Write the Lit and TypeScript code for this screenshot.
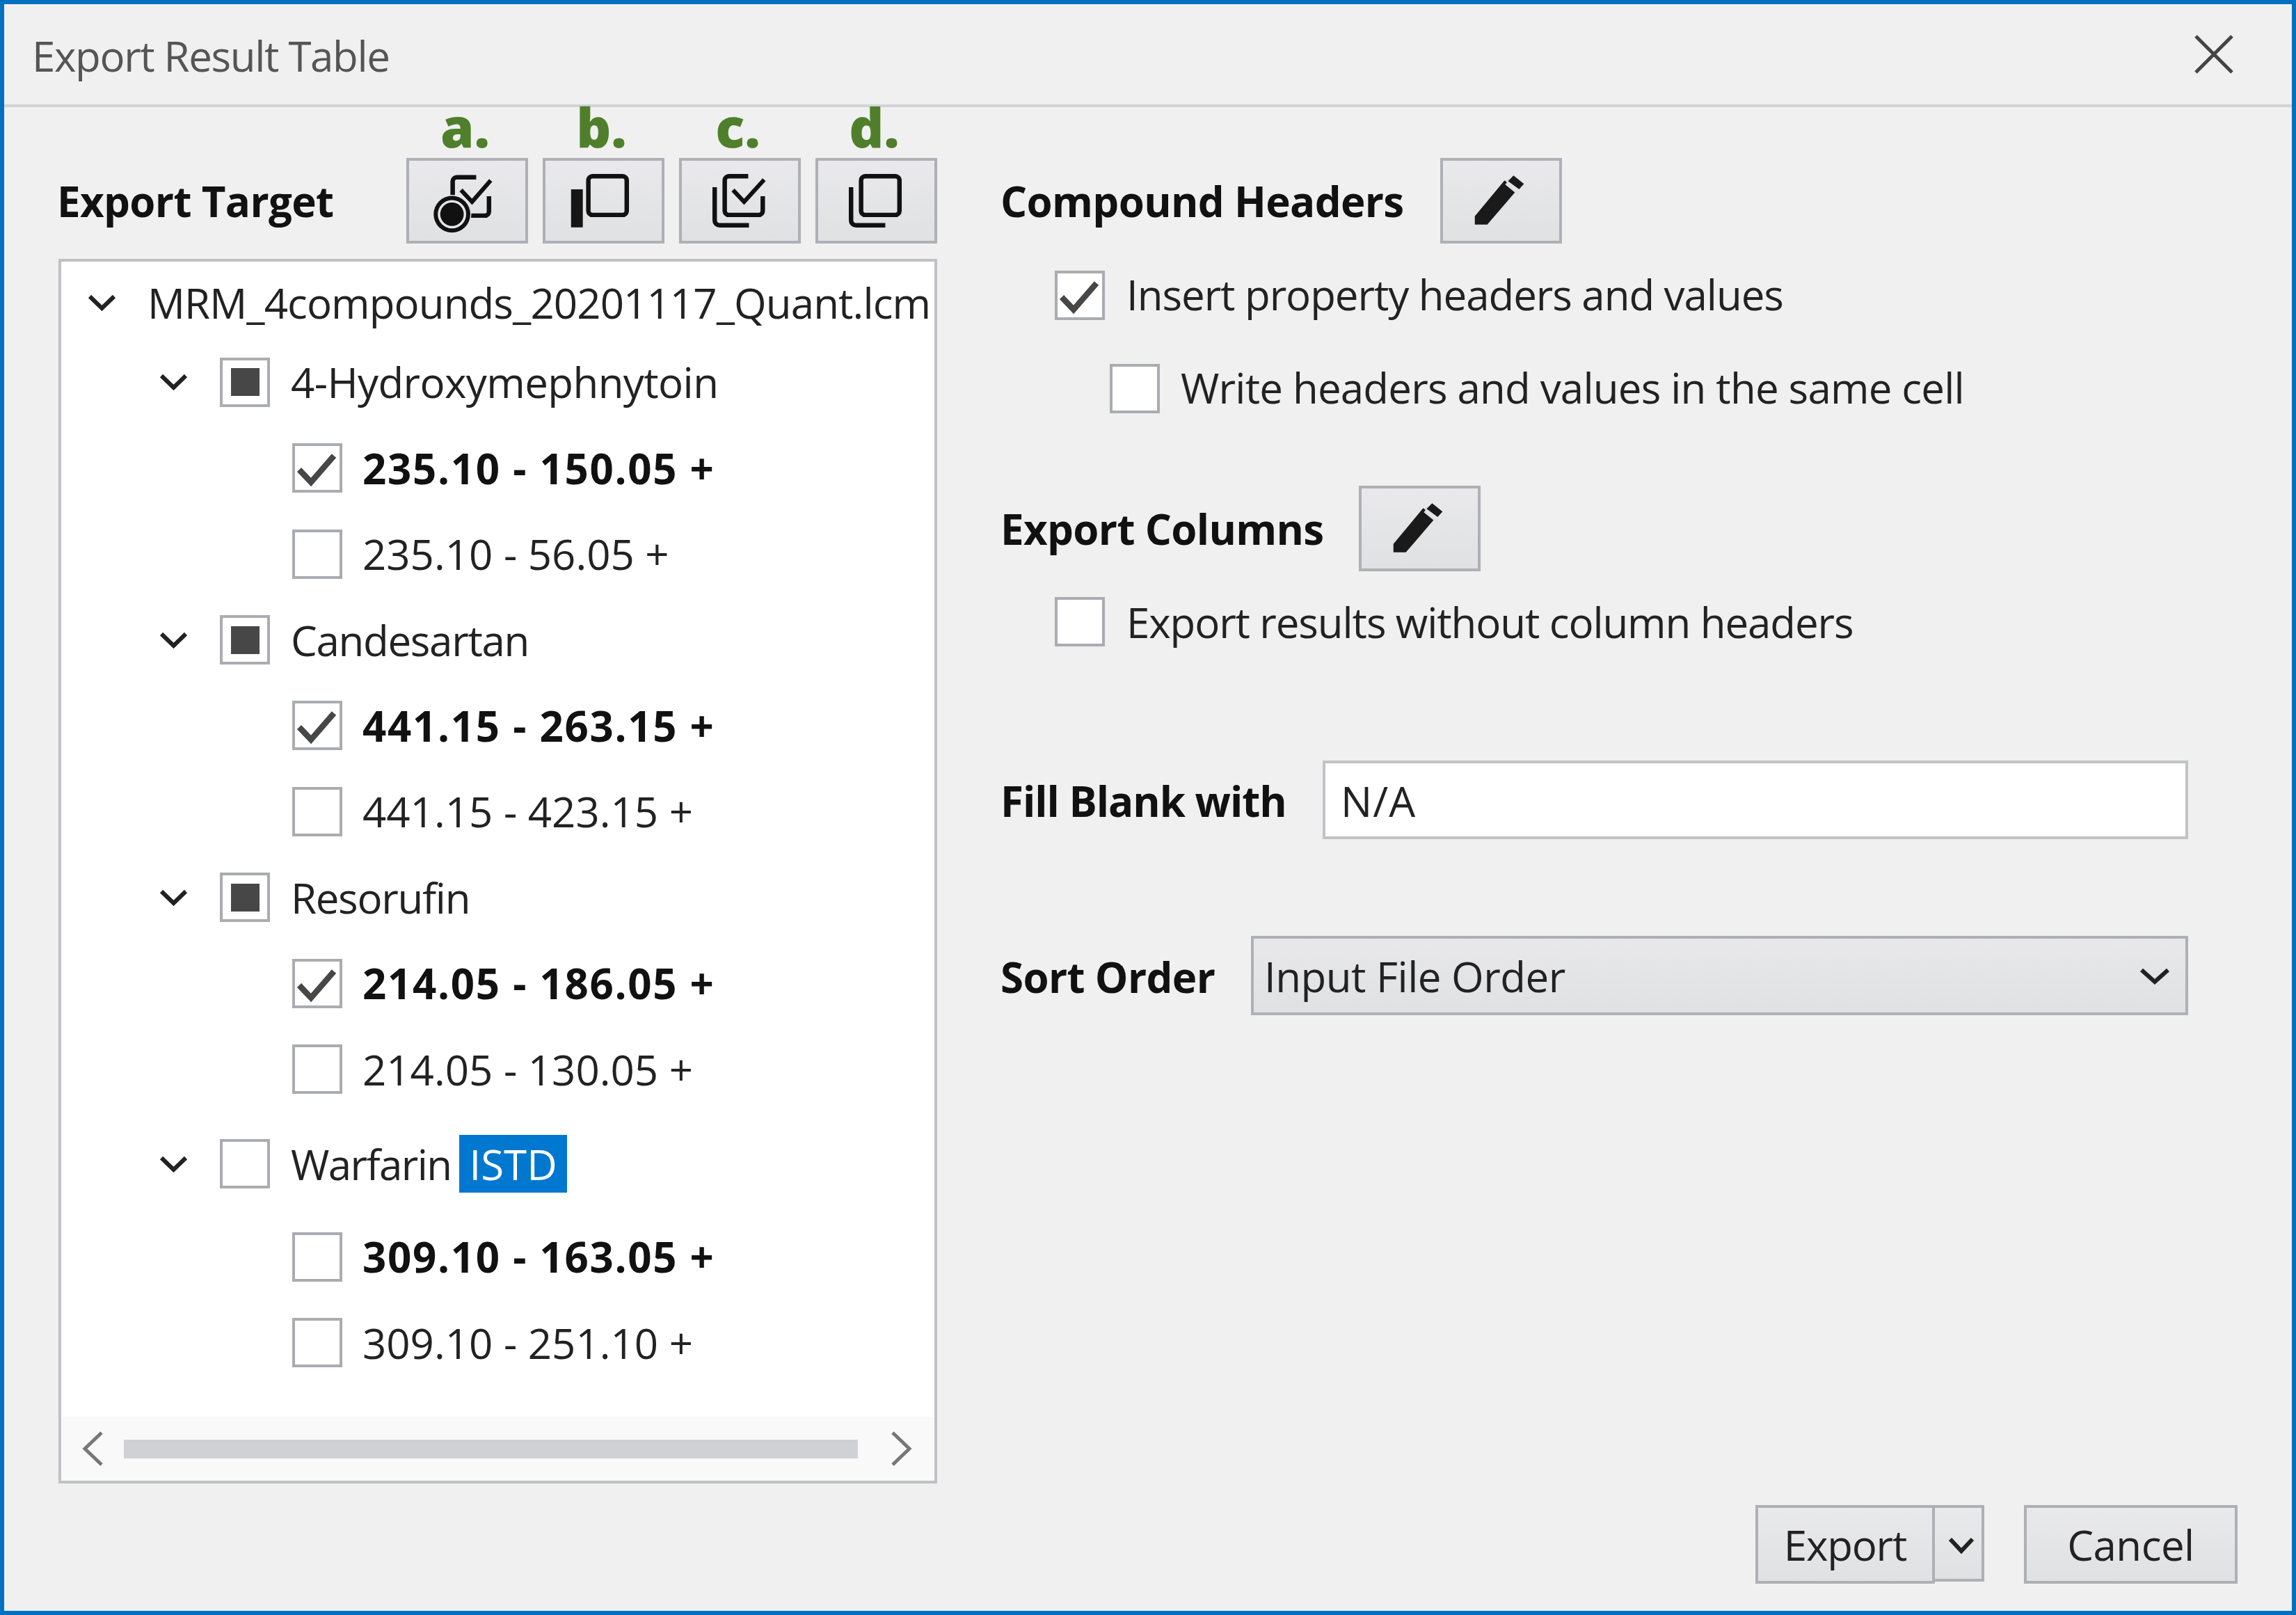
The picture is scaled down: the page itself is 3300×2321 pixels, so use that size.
import { LitElement, html, css } from "lit";
import { customElement } from "lit/decorators.js";

type Row = { kind: "root" | "comp" | "leaf"; text: string; state?: "on" | "mixed" | "off"; bold?: boolean; badge?: string; cls?: string };

const ROWS: Row[] = [
  { kind: "root", text: "MRM_4compounds_20201117_Quant.lcm" },
  { kind: "comp", text: "4-Hydroxymephnytoin", state: "mixed", cls: "first" },
  { kind: "leaf", text: "235.10 - 150.05 +", state: "on", bold: true },
  { kind: "leaf", text: "235.10 - 56.05 +", state: "off" },
  { kind: "comp", text: "Candesartan", state: "mixed" },
  { kind: "leaf", text: "441.15 - 263.15 +", state: "on", bold: true },
  { kind: "leaf", text: "441.15 - 423.15 +", state: "off" },
  { kind: "comp", text: "Resorufin", state: "mixed" },
  { kind: "leaf", text: "214.05 - 186.05 +", state: "on", bold: true },
  { kind: "leaf", text: "214.05 - 130.05 +", state: "off" },
  { kind: "comp", text: "Warfarin", state: "off", badge: "ISTD", cls: "warf" },
  { kind: "leaf", text: "309.10 - 163.05 +", state: "off", bold: true, cls: "warf-leaf" },
  { kind: "leaf", text: "309.10 - 251.10 +", state: "off" },
];

const chevron = html`<svg class="chev" viewBox="0 0 41 24"><path d="M3 3 L20.5 20 L38 3" fill="none" stroke="#222" stroke-width="6"/></svg>`;

const pencilSvg = html`<svg class="fill" viewBox="0 0 168 115"><polygon points="46,92 46,80 89,28 107,42 64,92" fill="#1a1a1a"/><polygon points="91,27 102,23 117,34 108,40" fill="#e2e2e4"/><polygon points="94,29 102,21 117,33 110,41" fill="#1a1a1a"/><polygon points="90,34 93,30 111,44 107,48" fill="#e2e2e4"/></svg>`;

const icons = [
  html`<svg class="fill" viewBox="0 0 168 115"><path d="M97 23.5 H69 a6 6 0 0 0 -6 6 V52 M115.5 51 V73 a6 6 0 0 1 -6 6 H89" fill="none" stroke="#111" stroke-width="6.5"/><path d="M75 42 L91 59 L118 28" fill="none" stroke="#111" stroke-width="6"/><circle cx="62" cy="77" r="28" fill="#e4e4e6"/><circle cx="62" cy="77" r="26.5" fill="#111"/><circle cx="62" cy="77" r="20.5" fill="#e6e6e8"/><circle cx="62" cy="77" r="17" fill="#111"/></svg>`,
  html`<svg class="fill" viewBox="0 0 168 115"><rect x="37" y="41" width="17" height="55" fill="#161616"/><rect x="62" y="22" width="55.5" height="56" rx="6" fill="none" stroke="#111" stroke-width="6.5"/></svg>`,
  html`<svg class="fill" viewBox="0 0 168 115"><path d="M96 22 H68 a6 6 0 0 0 -6 6 V72 a6 6 0 0 0 6 6 H111 a6 6 0 0 0 6 -6 V51" fill="none" stroke="#111" stroke-width="6.5"/><path d="M74 42 L90 59 L119 27" fill="none" stroke="#111" stroke-width="6"/><path d="M47.5 38 V86 a7 7 0 0 0 7 7 H97" fill="none" stroke="#111" stroke-width="6.5"/></svg>`,
  html`<svg class="fill" viewBox="0 0 168 115"><rect x="62" y="22" width="55.5" height="56" rx="6" fill="none" stroke="#111" stroke-width="6.5"/><path d="M47.5 38 V86 a7 7 0 0 0 7 7 H97" fill="none" stroke="#111" stroke-width="6.5"/></svg>`,
];

@customElement("app-root")
export class AppRoot extends LitElement {
  static styles = css`
    :host {
      display: block;
      width: 3300px;
      height: 2321px;
      font-family: "Open Sans", "Noto Sans", sans-serif;
      font-size: 60px;
      color: #222;
    }
    * { box-sizing: border-box; }
    .window {
      width: 100%;
      height: 100%;
      border: 6px solid #0070c0;
      background: #f0f0f0;
      display: flex;
      flex-direction: column;
      filter: blur(0.6px);
    }
    .titlebar {
      height: 148px;
      flex: none;
      border-bottom: 4px solid #d2d3d6;
      display: flex;
      align-items: center;
      justify-content: space-between;
      padding: 0 82px 0 40px;
      color: #555;
    }
    .title { letter-spacing: -1.35px; padding-top: 4px; }
    .close { width: 60px; height: 60px; display: block; }
    .body {
      flex: 1;
      min-height: 0;
      display: flex;
      gap: 93px;
      padding: 73px 0 0 78px;
    }
    .left { width: 1263px; flex: none; display: flex; flex-direction: column; gap: 22px; }
    .head { display: flex; align-items: center; height: 123px; }
    .label { font-weight: 700; color: #111; white-space: nowrap; letter-spacing: -0.65px; margin-left: -2px; }
    .tools { margin-left: auto; display: flex; gap: 21px; }
    .btn {
      position: relative;
      width: 175px;
      height: 123px;
      border: 4px solid #aeb0b5;
      background: linear-gradient(#e9e9eb, #e0e1e3);
      display: block;
      flex: none;
      padding: 0;
    }
    .fill { width: 100%; height: 100%; display: block; }
    .tag {
      position: absolute;
      left: -6px;
      right: 0;
      bottom: calc(100% + 10px);
      text-align: center;
      font-weight: 800;
      font-size: 78px;
      line-height: 1;
      color: #4f7f2b;
    }
    .tree {
      height: 1760px;
      border: 4px solid #c0c1c5;
      background: #fff;
      display: flex;
      flex-direction: column;
      overflow: hidden;
    }
    .rows {
      flex: 1;
      min-height: 0;
      overflow: hidden;
      padding-top: 20px;
      display: flex;
      flex-direction: column;
      gap: 45.4px;
    }
    .row { height: 78px; flex: none; display: flex; align-items: center; white-space: nowrap; letter-spacing: 0; }
    .row.root { padding-left: 38px; letter-spacing: -0.9px; }
    .row.root .chev { margin-right: 45px; }
    .row.comp { padding-left: 141px; letter-spacing: -1.3px; }
    .row.first { letter-spacing: -0.6px; }
    .row.leaf { padding-left: 332px; }
    .row.first { margin-top: -9px; }
    .row.warf { margin-top: 13px; letter-spacing: -1.6px; }
    .row.warf-leaf { margin-top: 10px; }
    .chev { width: 41px; height: 24px; flex: none; margin-right: 46px; }
    .comp .cb { margin-right: 30px; }
    .leaf .cb { margin-right: 29px; }
    .cb {
      width: 72px;
      height: 71px;
      flex: none;
      border: 4px solid #aaacb2;
      background: #fff;
      display: flex;
      align-items: center;
      justify-content: center;
    }
    .cb svg { width: 100%; height: 100%; display: block; }
    .mixed-mark { width: 41px; height: 40px; background: #474747; }
    .strong { font-weight: 700; color: #111; letter-spacing: 1.7px; }
    .badge { background: #0078d0; color: #fff; padding: 0 14px; margin-left: 12px; height: 83px; display: flex; align-items: center; letter-spacing: 0; }
    .hbar {
      height: 92px;
      flex: none;
      background: #f9f9f9;
      display: flex;
      align-items: center;
      padding-left: 30px;
    }
    .arrow { width: 31px; height: 50px; flex: none; display: block; }
    .thumb { width: 1055px; height: 27px; background: #d0d1d5; margin: 0 47px 0 29px; flex: none; }
    .right { width: 1705px; flex: none; display: flex; flex-direction: column; }
    .ch-label { flex: 0 0 632px; }
    .ec-label { flex: 0 0 515px; }
    .check { display: flex; align-items: center; height: 71px; gap: 31px; white-space: nowrap; }
    .c1 { margin: 39px 0 0 76px; letter-spacing: -1.05px; padding-bottom: 0; }
    .c2 { margin: 63px 0 0 155px; gap: 30px; letter-spacing: -0.8px; }
    .c1 span:last-child, .c2 span:last-child { padding-bottom: 3px; }
    .h2 { margin-top: 104px; }
    .c3 { margin: 37px 0 0 76px; letter-spacing: -1.1px; }
    .field { display: flex; align-items: center; }
    .f1 { margin-top: 164px; }
    .f2 { margin-top: 139px; }
    .fb-label { flex: 0 0 463px; letter-spacing: -1px; padding-top: 3px; }
    .so-label { flex: 0 0 360px; padding-top: 3px; }
    .input {
      flex: 1;
      height: 113px;
      background: #fff;
      border: 4px solid #c2c3c7;
      display: flex;
      align-items: center;
      padding: 3px 0 0 22px;
      letter-spacing: 1px;
    }
    .select {
      flex: 1;
      height: 114px;
      border: 4px solid #aeb0b5;
      background: linear-gradient(#e8e8ea, #e0e1e3);
      display: flex;
      align-items: center;
      justify-content: space-between;
      padding: 2px 22px 0 15px;
      letter-spacing: -0.5px;
    }
    .select svg { width: 44px; height: 24px; display: block; }
    .footer {
      flex: none;
      display: flex;
      justify-content: flex-end;
      align-items: flex-start;
      padding: 31px 78px 39px 0;
    }
    .fbtn {
      height: 113px;
      border: 4px solid #aeb0b5;
      background: linear-gradient(#e9e9eb, #e0e1e3);
      display: flex;
      align-items: center;
      justify-content: center;
    }
    .export { width: 258px; letter-spacing: -1.2px; }
    .split { width: 71px; height: 110px; border-left: none; padding: 6px 0 0 8px; }
    .split svg { width: 38px; height: 24px; display: block; }
    .cancel { width: 307px; margin-left: 57px; letter-spacing: -0.5px; }
  `;

  private box(state: Row["state"]) {
    return html`<span class="cb">
      ${state === "on"
        ? html`<svg viewBox="0 0 64 63"><path d="M6 34 L23 52 L56 14" fill="none" stroke="#474747" stroke-width="8.5"/></svg>`
        : state === "mixed"
          ? html`<span class="mixed-mark"></span>`
          : ""}
    </span>`;
  }

  private row(r: Row) {
    return html`<div class="row ${r.kind} ${r.cls ?? ""}">
      ${r.kind !== "leaf" ? chevron : ""}
      ${r.state ? this.box(r.state) : ""}
      <span class=${r.bold ? "strong" : ""}>${r.text}</span>
      ${r.badge ? html`<span class="badge">${r.badge}</span>` : ""}
    </div>`;
  }

  render() {
    return html`<div class="window">
      <div class="titlebar">
        <span class="title">Export Result Table</span>
        <svg class="close" viewBox="0 0 60 60"><path d="M4 4 L56 56 M56 4 L4 56" stroke="#444" stroke-width="5" fill="none"/></svg>
      </div>
      <div class="body">
        <div class="left">
          <div class="head">
            <span class="label">Export Target</span>
            <div class="tools">
              ${icons.map((ic, i) => html`<div class="btn"><span class="tag">${"abcd"[i]}.</span>${ic}</div>`)}
            </div>
          </div>
          <div class="tree">
            <div class="rows">${ROWS.map((r) => this.row(r))}</div>
            <div class="hbar">
              <svg class="arrow" viewBox="0 0 31 50"><path d="M28 2 L4 25 L28 48" fill="none" stroke="#777" stroke-width="5"/></svg>
              <div class="thumb"></div>
              <svg class="arrow" viewBox="0 0 31 50"><path d="M3 2 L27 25 L3 48" fill="none" stroke="#777" stroke-width="5"/></svg>
            </div>
          </div>
        </div>
        <div class="right">
          <div class="head">
            <span class="label ch-label">Compound Headers</span>
            <div class="btn">${pencilSvg}</div>
          </div>
          <div class="check c1">${this.box("on")}<span>Insert property headers and values</span></div>
          <div class="check c2">${this.box("off")}<span>Write headers and values in the same cell</span></div>
          <div class="head h2">
            <span class="label ec-label">Export Columns</span>
            <div class="btn">${pencilSvg}</div>
          </div>
          <div class="check c3">${this.box("off")}<span>Export results without column headers</span></div>
          <div class="field f1">
            <span class="label fb-label">Fill Blank with</span>
            <div class="input">N/A</div>
          </div>
          <div class="field f2">
            <span class="label so-label">Sort Order</span>
            <div class="select">
              <span>Input File Order</span>
              <svg viewBox="0 0 44 24"><path d="M3 3 L22 20 L41 3" fill="none" stroke="#222" stroke-width="6"/></svg>
            </div>
          </div>
        </div>
      </div>
      <div class="footer">
        <div class="fbtn export">Export</div>
        <div class="fbtn split"><svg viewBox="0 0 38 24"><path d="M3 3 L19 20 L35 3" fill="none" stroke="#222" stroke-width="6"/></svg></div>
        <div class="fbtn cancel">Cancel</div>
      </div>
    </div>`;
  }
}
